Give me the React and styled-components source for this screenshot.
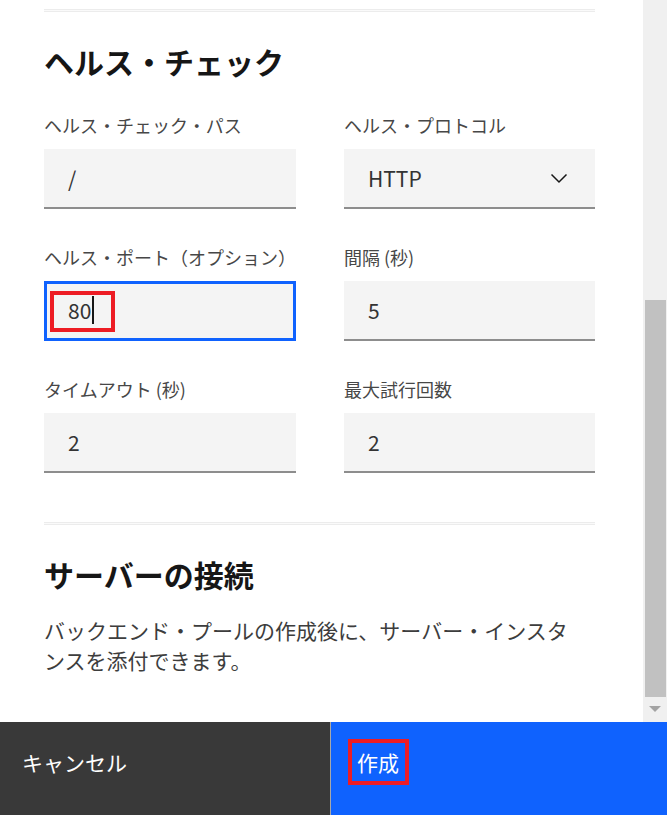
import React from "react";
import styled, { createGlobalStyle } from "styled-components";

const GlobalStyle = createGlobalStyle`
  html, body {
    margin: 0;
    padding: 0;
    height: 100%;
    background: #ffffff;
    font-family: "Noto Sans CJK JP", "Noto Sans", sans-serif;
  }
  #root { height: 100%; }
  * { box-sizing: border-box; }
`;

const Modal = styled.div`
  display: flex;
  flex-direction: column;
  width: 667px;
  height: 815px;
  background: #ffffff;
`;

const Body = styled.div`
  flex: 1 1 auto;
  min-height: 0;
  display: flex;
`;

const ScrollArea = styled.div`
  flex: 1 1 auto;
  min-width: 0;
  overflow-y: auto;
  padding: 9px 48px 0 44px;
`;

const Scrollbar = styled.div`
  flex: 0 0 24px;
  display: grid;
  grid-template-rows: 24px 276px 397px 1fr;
  background: #f0f0f0;
`;

const ScrollThumb = styled.div`
  grid-row: 3;
  margin: 0 1px 0 2px;
  background: #c1c1c1;
`;

const ScrollButton = styled.div`
  grid-row: 4;
  display: flex;
  align-items: center;
  justify-content: center;
  padding-bottom: 2px;
`;

const DownArrow = styled.span`
  width: 0;
  height: 0;
  border-left: 6px solid transparent;
  border-right: 6px solid transparent;
  border-top: 6px solid #a3a3a3;
`;

const Section = styled.section`
  padding: 30px 0 ${(p) => (p.$last ? 47 : 49)}px;
`;

const Divider = styled.hr`
  margin: 0;
  height: 3px;
  border: none;
  border-top: 1px solid #ececec;
  border-bottom: 1px solid #ececec;
  background: #fafafa;
`;

const Heading = styled.h2`
  margin: 0 0 ${(p) => (p.$tight ? 22 : 33)}px;
  font-size: 30px;
  line-height: 38px;
  font-weight: 700;
  color: #161616;
`;

const Description = styled.p`
  margin: 0;
  max-width: 540px;
  font-size: 21px;
  line-height: 30px;
  font-weight: 400;
  color: #3d3d3d;
`;

const Grid = styled.div`
  display: grid;
  grid-template-columns: 1fr 1fr;
  column-gap: 48px;
  row-gap: 36px;
`;

const Field = styled.div`
  display: flex;
  flex-direction: column;
  gap: 12px;
`;

const Label = styled.label`
  font-size: 18px;
  line-height: 24px;
  color: #474747;
  white-space: nowrap;
`;

const InputBox = styled.div`
  position: relative;
  display: flex;
  align-items: center;
  justify-content: space-between;
  height: 60px;
  padding: 0 24px;
  background: #f4f4f4;
  border-bottom: 2px solid #8d8d8d;
  font-size: 21px;
  color: #333333;
  outline: ${(p) => (p.$focused ? "3px solid #0f62fe" : "none")};
  outline-offset: -3px;
`;

const Value = styled.span`
  display: inline-flex;
  align-items: center;
  line-height: 28px;
`;

const Caret = styled.span`
  display: inline-block;
  width: 2px;
  height: 28px;
  margin-left: 1px;
  background: #161616;
`;

const Annotation = styled.span`
  position: absolute;
  left: ${(p) => p.$left}px;
  top: ${(p) => p.$top}px;
  width: ${(p) => p.$width}px;
  height: ${(p) => p.$height}px;
  border: 4px solid #ed1c24;
  pointer-events: none;
`;

const Footer = styled.div`
  flex: 0 0 93px;
  display: flex;
`;

const FooterButton = styled.button`
  position: relative;
  display: flex;
  align-items: flex-start;
  margin: 0;
  border: none;
  padding: 26px 0 0 ${(p) => (p.$primary ? 26 : 22)}px;
  font-family: inherit;
  font-size: 21px;
  line-height: 28px;
  color: #ffffff;
  text-align: left;
  cursor: pointer;
  background: ${(p) => (p.$primary ? "#0f62fe" : "#393939")};
  flex: ${(p) => (p.$primary ? "1 1 auto" : "0 0 331px")};
  border-right: ${(p) => (p.$primary ? "none" : "1px solid #a8a8a8")};
`;

const Chevron = () => (
  <svg width="24" height="24" viewBox="0 0 24 24" fill="none" aria-hidden="true">
    <path d="M4.5 8.5 L12 16 L19.5 8.5" stroke="#161616" strokeWidth="1.5" />
  </svg>
);

function TextField({ label, value, focused, select }) {
  return (
    <Field>
      <Label>{label}</Label>
      <InputBox $focused={focused}>
        <Value>
          {value}
          {focused && <Caret />}
        </Value>
        {select && <Chevron />}
        {focused && <Annotation $left={6} $top={10} $width={65} $height={41} />}
      </InputBox>
    </Field>
  );
}

export default function App() {
  return (
    <>
      <GlobalStyle />
      <Modal>
        <Body>
          <ScrollArea>
            <Divider />
            <Section>
              <Heading>ヘルス・チェック</Heading>
              <Grid>
                <TextField label="ヘルス・チェック・パス" value="/" />
                <TextField label="ヘルス・プロトコル" value="HTTP" select />
                <TextField label="ヘルス・ポート（オプション）" value="80" focused />
                <TextField label="間隔 (秒)" value="5" />
                <TextField label="タイムアウト (秒)" value="2" />
                <TextField label="最大試行回数" value="2" />
              </Grid>
            </Section>
            <Divider />
            <Section $last>
              <Heading $tight>サーバーの接続</Heading>
              <Description>
                バックエンド・プールの作成後に、サーバー・インスタンスを添付できます。
              </Description>
            </Section>
          </ScrollArea>
          <Scrollbar aria-hidden="true">
            <ScrollThumb />
            <ScrollButton>
              <DownArrow />
            </ScrollButton>
          </Scrollbar>
        </Body>
        <Footer>
          <FooterButton type="button">キャンセル</FooterButton>
          <FooterButton type="button" $primary>
            作成
            <Annotation $left={17} $top={17} $width={61} $height={46} />
          </FooterButton>
        </Footer>
      </Modal>
    </>
  );
}
